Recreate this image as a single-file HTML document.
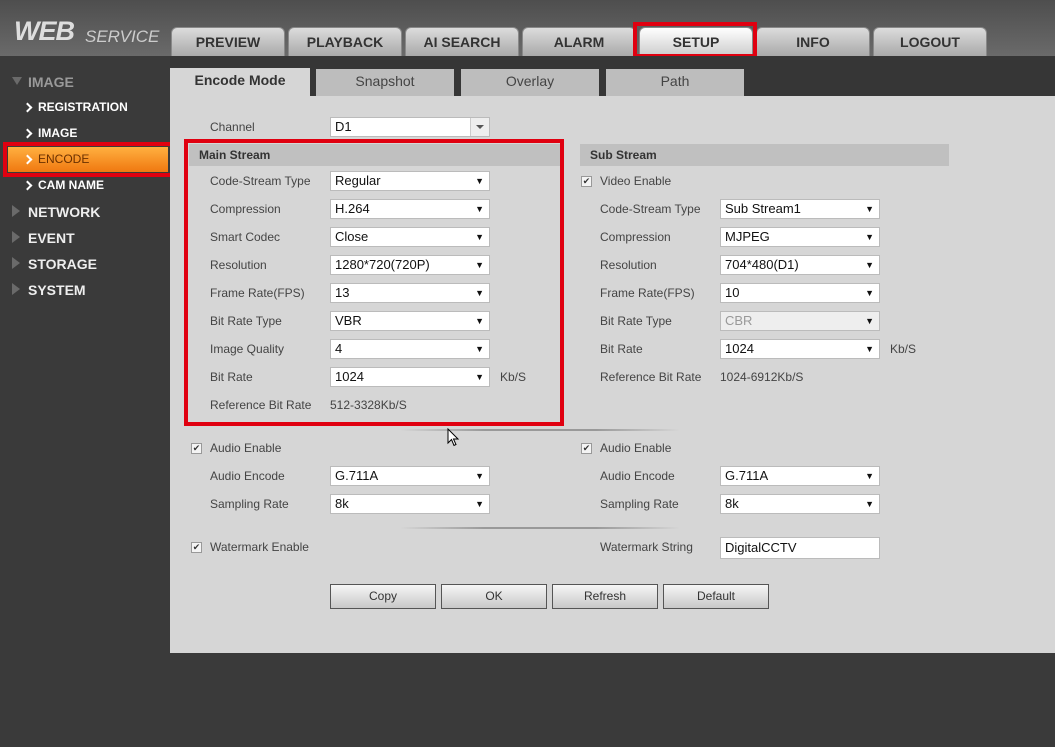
<!DOCTYPE html>
<html><head><meta charset="utf-8"><style>
*{margin:0;padding:0;box-sizing:border-box}
body{width:1055px;height:747px;background:#3a3a3a;font-family:"Liberation Sans",Arial,sans-serif;position:relative;overflow:hidden;font-size:12px;color:#333}
.a{position:absolute}
#hdr{left:0;top:0;width:1055px;height:56px;background:linear-gradient(#4e4e4e,#6a6a6a)}
.tt{position:absolute;top:27px;height:29px;width:114px;border-radius:6px 6px 0 0;background:linear-gradient(#dcdcdc,#a9a9a9);border:1px solid #888;border-bottom:none;font-weight:bold;font-size:14px;color:#333;text-align:center;line-height:28px}
.st{position:absolute;top:69px;height:27px;width:138px;background:#bdbdbd;text-align:center;font-size:14px;color:#444;line-height:25px}
.nav{position:absolute;left:28px;color:#eee;font-weight:bold;font-size:14px}
.tri{position:absolute;left:12px;width:0;height:0;border-left:8px solid #6a6a6a;border-top:6px solid transparent;border-bottom:6px solid transparent}
.sub{position:absolute;left:38px;color:#fff;font-size:12px;font-weight:bold}
.chev{position:absolute;left:24px;width:7px;height:7px;border-right:2px solid #fff;border-top:2px solid #fff;transform:rotate(45deg)}
.lb{position:absolute;font-size:12px;color:#444}
.sel{position:absolute;width:160px;height:20px;background:#fff;border:1px solid #bbb;font-size:13px;color:#111;padding-left:4px;line-height:18px}
.sel:after{content:"▼";position:absolute;right:5px;top:0;font-size:9px;color:#111}
.hd{position:absolute;height:22px;background:#c0c0c0;font-weight:bold;font-size:12px;color:#333;padding-left:10px;line-height:22px}
.cb{position:absolute;width:11px;height:11px;border:1px solid #999;background:#f4f4f4;font-size:9px;line-height:9px;text-align:center;color:#333}
.btn{position:absolute;top:584px;width:106px;height:25px;border:1px solid #555;background:linear-gradient(#f6f6f6,#c8c8c8);text-align:center;line-height:22px;font-size:12px;color:#333}
.red{position:absolute;border:4px solid #e00010}
</style></head><body>
<div class="a" id="hdr"></div>
<div class="a" style="left:14px;top:16px;font-size:27px;font-weight:bold;font-style:italic;color:#ddd;letter-spacing:-1px">WEB</div>
<div class="a" style="left:85px;top:27px;font-size:17px;font-style:italic;color:#ccc">SERVICE</div>
<div class="tt" style="left:171px">PREVIEW</div>
<div class="tt" style="left:288px">PLAYBACK</div>
<div class="tt" style="left:405px">AI SEARCH</div>
<div class="tt" style="left:522px">ALARM</div>
<div class="tt" style="left:639px;background:linear-gradient(#fff,#ccc)">SETUP</div>
<div class="tt" style="left:756px">INFO</div>
<div class="tt" style="left:873px">LOGOUT</div>
<div class="red" style="left:633px;top:22px;width:124px;height:36px"></div>

<div class="a" style="left:12px;top:77px;width:0;height:0;border-top:8px solid #6a6a6a;border-left:5px solid transparent;border-right:5px solid transparent"></div>
<div class="nav" style="top:74px;color:#999">IMAGE</div>
<div class="chev" style="top:104px"></div><div class="sub" style="top:100px">REGISTRATION</div>
<div class="chev" style="top:130px"></div><div class="sub" style="top:126px">IMAGE</div>
<div class="a" style="left:8px;top:147px;width:160px;height:25px;background:linear-gradient(#ffb040,#f07810)"></div>
<div class="chev" style="top:156px"></div><div class="sub" style="top:152px;color:#6a3000;font-weight:normal">ENCODE</div>
<div class="red" style="left:3px;top:142px;width:171px;height:35px"></div>
<div class="chev" style="top:182px"></div><div class="sub" style="top:178px">CAM NAME</div>
<div class="tri" style="top:205px"></div><div class="nav" style="top:204px">NETWORK</div>
<div class="tri" style="top:231px"></div><div class="nav" style="top:230px">EVENT</div>
<div class="tri" style="top:257px"></div><div class="nav" style="top:256px">STORAGE</div>
<div class="tri" style="top:283px"></div><div class="nav" style="top:282px">SYSTEM</div>

<div class="a" style="left:170px;top:56px;width:885px;height:40px;background:#363636"></div>
<div class="st" style="left:170px;top:68px;height:28px;width:140px;background:#d6d6d6;font-weight:bold;color:#333">Encode Mode</div>
<div class="st" style="left:316px">Snapshot</div>
<div class="st" style="left:461px">Overlay</div>
<div class="st" style="left:606px">Path</div>
<div class="a" style="left:170px;top:96px;width:885px;height:557px;background:#d6d6d6"></div>

<div class="lb" style="left:210px;top:120px">Channel</div>
<div class="a" style="left:330px;top:117px;width:160px;height:20px;background:#fff;border:1px solid #bbb;font-size:13px;color:#111;padding-left:4px;line-height:18px">D1<div class="a" style="right:0;top:0;width:19px;height:18px;background:#eee;border-left:1px solid #ccc"><div class="a" style="left:5px;top:7px;border-top:4px solid #555;border-left:4px solid transparent;border-right:4px solid transparent"></div></div></div>
<div class="hd" style="left:189px;top:144px;width:372px">Main Stream</div>
<div class="hd" style="left:580px;top:144px;width:369px">Sub Stream</div>

<div class="lb" style="left:210px;top:174px">Code-Stream Type</div><div class="sel" style="left:330px;top:171px">Regular</div>
<div class="lb" style="left:210px;top:202px">Compression</div><div class="sel" style="left:330px;top:199px">H.264</div>
<div class="lb" style="left:210px;top:230px">Smart Codec</div><div class="sel" style="left:330px;top:227px">Close</div>
<div class="lb" style="left:210px;top:258px">Resolution</div><div class="sel" style="left:330px;top:255px">1280*720(720P)</div>
<div class="lb" style="left:210px;top:286px">Frame Rate(FPS)</div><div class="sel" style="left:330px;top:283px">13</div>
<div class="lb" style="left:210px;top:314px">Bit Rate Type</div><div class="sel" style="left:330px;top:311px">VBR</div>
<div class="lb" style="left:210px;top:342px">Image Quality</div><div class="sel" style="left:330px;top:339px">4</div>
<div class="lb" style="left:210px;top:370px">Bit Rate</div><div class="sel" style="left:330px;top:367px">1024</div><div class="lb" style="left:500px;top:370px">Kb/S</div>
<div class="lb" style="left:210px;top:398px">Reference Bit Rate</div><div class="lb" style="left:330px;top:398px">512-3328Kb/S</div>
<div class="red" style="left:184px;top:139px;width:380px;height:287px"></div>

<div class="cb" style="left:581px;top:176px">✔</div><div class="lb" style="left:600px;top:174px">Video Enable</div>
<div class="lb" style="left:600px;top:202px">Code-Stream Type</div><div class="sel" style="left:720px;top:199px">Sub Stream1</div>
<div class="lb" style="left:600px;top:230px">Compression</div><div class="sel" style="left:720px;top:227px">MJPEG</div>
<div class="lb" style="left:600px;top:258px">Resolution</div><div class="sel" style="left:720px;top:255px">704*480(D1)</div>
<div class="lb" style="left:600px;top:286px">Frame Rate(FPS)</div><div class="sel" style="left:720px;top:283px">10</div>
<div class="lb" style="left:600px;top:314px">Bit Rate Type</div><div class="sel" style="left:720px;top:311px;background:#eee;color:#999">CBR</div>
<div class="lb" style="left:600px;top:342px">Bit Rate</div><div class="sel" style="left:720px;top:339px">1024</div><div class="lb" style="left:890px;top:342px">Kb/S</div>
<div class="lb" style="left:600px;top:370px">Reference Bit Rate</div><div class="lb" style="left:720px;top:370px">1024-6912Kb/S</div>

<div class="a" style="left:400px;top:429px;width:280px;height:2px;background:linear-gradient(90deg,#d6d6d6,#999 30%,#999 70%,#d6d6d6)"></div>
<div class="cb" style="left:191px;top:443px">✔</div><div class="lb" style="left:210px;top:441px">Audio Enable</div>
<div class="cb" style="left:581px;top:443px">✔</div><div class="lb" style="left:600px;top:441px">Audio Enable</div>
<div class="lb" style="left:210px;top:469px">Audio Encode</div><div class="sel" style="left:330px;top:466px">G.711A</div>
<div class="lb" style="left:600px;top:469px">Audio Encode</div><div class="sel" style="left:720px;top:466px">G.711A</div>
<div class="lb" style="left:210px;top:497px">Sampling Rate</div><div class="sel" style="left:330px;top:494px">8k</div>
<div class="lb" style="left:600px;top:497px">Sampling Rate</div><div class="sel" style="left:720px;top:494px">8k</div>
<div class="a" style="left:400px;top:527px;width:280px;height:2px;background:linear-gradient(90deg,#d6d6d6,#999 30%,#999 70%,#d6d6d6)"></div>
<div class="cb" style="left:191px;top:542px">✔</div><div class="lb" style="left:210px;top:540px">Watermark Enable</div>
<div class="lb" style="left:600px;top:540px">Watermark String</div>
<div class="a" style="left:720px;top:537px;width:160px;height:22px;background:#fff;border:1px solid #bbb;font-size:13px;color:#111;padding-left:4px;line-height:20px">DigitalCCTV</div>

<div class="btn" style="left:330px">Copy</div>
<div class="btn" style="left:441px">OK</div>
<div class="btn" style="left:552px">Refresh</div>
<div class="btn" style="left:663px">Default</div>

<svg class="a" style="left:447px;top:428px" width="14" height="20" viewBox="0 0 14 20"><path d="M1 1 L1 15 L4.5 11.5 L7 17.5 L9 16.5 L6.5 11 L11 11 Z" fill="#fff" stroke="#000" stroke-width="1"/></svg>
</body></html>
